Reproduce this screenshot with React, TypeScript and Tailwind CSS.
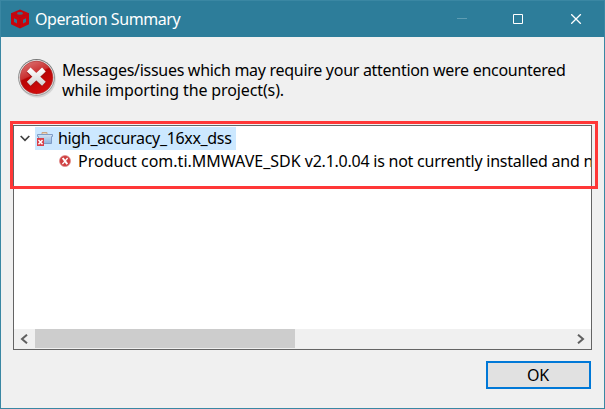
import type { ReactNode } from "react";

function CubeIcon() {
  return (
    <svg width="20" height="20" viewBox="0 0 20 20">
      <path d="M10 .5 19 4.2V15.200L10 19.500 1 15.200V4.200Z" fill="#c9040c" />
      <path d="M1 4.500 10 8.500 19 4.500M10 8.500V19" fill="none" stroke="#9a1420" strokeWidth=".6" />
      <ellipse cx="10" cy="4.400" rx="3" ry="1.400" fill="#3d6d86" />
      <path d="M4 9.300 7 10.700V14.600L4 13Z" fill="#35738f" />
      <path d="M16 9.300 13 10.700V14.600L16 13Z" fill="#35738f" />
    </svg>
  );
}

function ErrorIcon() {
  return (
    <svg width="40" height="40" viewBox="0 0 40 40">
      <defs>
        <linearGradient id="rim" x1="0" y1="0" x2="0" y2="1">
          <stop offset="0" stopColor="#777" />
          <stop offset="1" stopColor="#a8a8a8" />
        </linearGradient>
        <linearGradient id="red" x1="0" y1="0" x2="0.45" y2="1">
          <stop offset="0" stopColor="#e08080" />
          <stop offset="0.48" stopColor="#c93030" />
          <stop offset="0.52" stopColor="#b80404" />
          <stop offset="1" stopColor="#d00c0c" />
        </linearGradient>
        <linearGradient id="cross" gradientUnits="userSpaceOnUse" x1="0" y1="10" x2="0" y2="29">
          <stop offset="0" stopColor="#ffffff" />
          <stop offset="1" stopColor="#cfcfcf" />
        </linearGradient>
      </defs>
      <ellipse cx="20.500" cy="21.500" rx="18.300" ry="18" fill="#d5d5d5" />
      <circle cx="19.500" cy="19.500" r="18.400" fill="url(#rim)" />
      <circle cx="19.500" cy="19.500" r="17.400" fill="#e9e9e9" />
      <circle cx="19.500" cy="19.500" r="16.400" fill="url(#red)" stroke="#a33" strokeWidth=".6" />
      <path d="M11.700 12.200 26.900 26.400M26.900 12.200 11.700 26.400" stroke="#a01818" strokeWidth="6.200" />
      <path d="M11.700 11.500 26.900 25.700M26.900 11.500 11.700 25.700" stroke="url(#cross)" strokeWidth="5.400" />
    </svg>
  );
}

function ProjectIcon() {
  return (
    <svg width="16" height="16" viewBox="0 0 16 16">
      <defs>
        <linearGradient id="folder" x1="0" y1="0" x2="0" y2="1">
          <stop offset="0" stopColor="#d3e4f4" />
          <stop offset="1" stopColor="#8db3dd" />
        </linearGradient>
      </defs>
      <path d="M5 3V1.500h5V3" fill="#e8d3bb" stroke="#c9a585" />
      <path d="M.5 3.500H15.500V5.500H14.500V12.500H1.500V5.500H.5Z" fill="url(#folder)" stroke="#7f9cc6" />
      <rect x="0" y="7" width="7" height="8" fill="#d9404a" />
      <path d="M1.500 9 5.500 13.200M5.500 9 1.500 13.200" stroke="#fff" strokeWidth="1.400" />
    </svg>
  );
}

function ProblemIcon() {
  return (
    <svg width="12" height="12" viewBox="0 0 12 12">
      <circle cx="6" cy="6" r="5.500" fill="#cf3f40" stroke="#e08a88" strokeWidth=".7" />
      <path d="M3.700 3 8.300 9.200" stroke="#fff" strokeWidth="2" />
      <path d="M8.600 3 3.400 9.200" stroke="#fff" strokeWidth="1.300" />
    </svg>
  );
}

function Label({ className, children }: { className: string; children: ReactNode }) {
  return <span className={`whitespace-pre ${className}`}>{children}</span>;
}

export default function App() {
  return (
    <div className="flex h-[409px] w-[605px] flex-col overflow-hidden border border-[#3a87a3] bg-[#f0f0f0] font-['Noto_Sans',sans-serif] text-[16px] leading-[20px] text-black">
      <header className="flex h-9 shrink-0 items-center bg-[#2d7d9a] pl-[9px] text-white">
        <span className="mb-px"><CubeIcon /></span>
        <Label className="mb-px ml-[5px] tracking-[-0.44px]">Operation Summary</Label>
        <div className="ml-auto flex items-center pr-[22px]">
          <svg width="10" height="10" className="mr-[46px]"><path d="M0 4.500H10" stroke="#5f9db3" /></svg>
          <svg width="10" height="10" className="mr-[48px]"><path d="M.5 .5H9.500V9.500H.5Z" fill="none" stroke="#fff" /></svg>
          <svg width="11" height="10"><path d="M.2 .2 9.800 9.800M9.800 .2 .2 9.800" stroke="#fff" strokeWidth="1.300" /></svg>
        </div>
      </header>

      <section className="flex h-[88px] shrink-0 pl-4 pt-[21px]">
        <ErrorIcon />
        <div className="ml-[5px] mt-[2px] flex flex-col">
          <Label className="tracking-[-0.29px]">Messages/issues which may require your attention were encountered</Label>
          <Label className="tracking-[-0.12px]">while importing the project(s).</Label>
        </div>
      </section>

      <main className="relative ml-3 flex h-[225px] w-[579px] shrink-0 flex-col border border-[#646464] bg-white">
        <div className="flex-1 overflow-hidden pt-px">
          <div className="flex h-[23px] items-center">
            <svg width="10" height="7" className="ml-[6px] mr-[5px]"><path d="M.7 1 5 5.300 9.300 1" fill="none" stroke="#404040" strokeWidth="1.700" /></svg>
            <div className="flex h-[23px] w-[201px] items-center bg-[#cce8ff] pl-[2px]">
              <ProjectIcon />
              <Label className="mb-[2px] ml-[5px] tracking-[-0.33px]">high_accuracy_16xx_dss</Label>
            </div>
          </div>
          <div className="flex h-[23px] items-center pb-[2px] pl-[45px]">
            <span className="shrink-0"><ProblemIcon /></span>
            <Label className="ml-[7px] tracking-[-0.24px]">
              <span className="tracking-normal">Product com.ti.MMWAVE_SDK </span>v2.1.0.04 is not currently installed and n
            </Label>
          </div>
        </div>
        <div className="flex h-5 shrink-0 items-center bg-[#f0f0f0] px-[6px]">
          <svg width="9" height="10"><path d="M7 .7 2 5 7 9.300" fill="none" stroke="#606060" strokeWidth="2" /></svg>
          <div className="mb-px ml-[6px] h-[19px] w-[260px] bg-[#cdcdcd]" />
          <svg width="9" height="10" className="ml-auto"><path d="M2 .7 7 5 2 9.300" fill="none" stroke="#606060" strokeWidth="2" /></svg>
        </div>
        <div className="pointer-events-none absolute -left-1 -top-[5px] h-[68px] w-[588px] border-3 border-[#ff3737]" />
      </main>

      <footer className="flex justify-end pr-[13px] pt-[11px]">
        <button className="h-7 w-[105px] border-2 border-[#0078d7] bg-[#e1e1e1] pr-px leading-[24px] tracking-[-0.1px]">OK</button>
      </footer>
    </div>
  );
}
